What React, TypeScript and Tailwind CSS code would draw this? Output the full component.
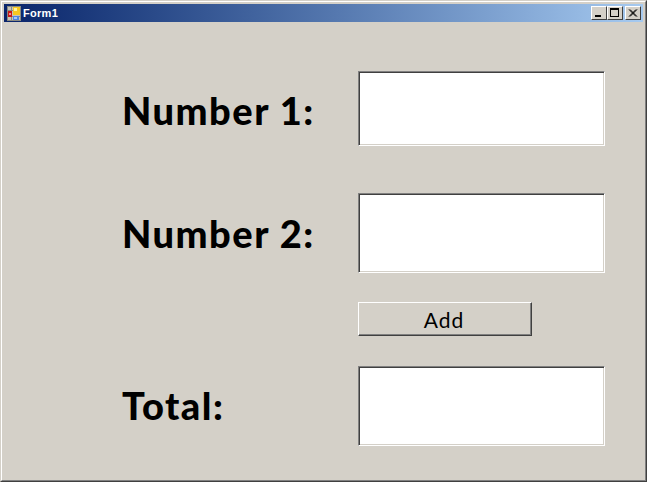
const frameBtn =
  "w-[16px] h-[14px] bg-[#d4d0c8] border border-t-white border-l-white border-r-[#404040] border-b-[#404040] flex items-center justify-center";

function TextBox({ h }: { h: string }) {
  return (
    <div className={`w-[247px] ${h} bg-white border border-t-[#808080] border-l-[#808080] border-r-white border-b-white shadow-[inset_1px_1px_0_#404040,inset_-1px_-1px_0_#d4d0c8]`} />
  );
}

function Label({ text, cls }: { text: string; cls: string }) {
  return (
    <div className={`w-[236px] shrink-0 font-['Lato',sans-serif] font-black text-black text-[38px] leading-none tracking-[1.5px] ${cls}`}>
      {text}
    </div>
  );
}

export default function App() {
  return (
    <div className="w-[647px] h-[482px] bg-[#d4d0c8] border border-t-[#d4d0c8] border-l-[#d4d0c8] border-r-[#404040] border-b-[#404040] overflow-hidden">
      <div className="h-full border border-t-white border-l-white border-r-[#808080] border-b-[#808080] p-[2px] flex flex-col">
        <div className="h-[18px] shrink-0 bg-gradient-to-r from-[#0a246a] to-[#a6caf0] flex items-center pl-[3px] pr-[2px]">
          <svg width="14" height="15" viewBox="0 0 14 15" className="shrink-0">
            <rect x="0.5" y="0.5" width="13" height="14" fill="#c8c4b8" stroke="#8a8a80" />
            <path d="M0 4.5h6M4.5 0v15M0 10.5h14M9.5 10v5" stroke="#8a8a80" fill="none" />
            <rect x="6" y="1" width="7" height="8" fill="#f8c820" />
            <rect x="7" y="2" width="3" height="3" fill="#fff2a0" />
            <rect x="1" y="5" width="4" height="6" fill="#c81818" />
            <rect x="2" y="7" width="2" height="2" fill="#f09090" />
            <rect x="6" y="10" width="6" height="4" fill="#5088e0" />
            <rect x="7" y="11" width="3" height="2" fill="#a8c8f8" />
          </svg>
          <span className="ml-[2px] font-['Liberation_Sans',sans-serif] font-bold text-white text-[11px] leading-none tracking-[0.3px]">Form1</span>
          <div className="ml-auto flex">
            <div className={frameBtn}>
              <svg width="14" height="12" viewBox="0 0 14 12">
                <rect x="3" y="8" width="6" height="2" fill="#000" />
              </svg>
            </div>
            <div className={frameBtn}>
              <svg width="14" height="12" viewBox="0 0 14 12">
                <path d="M2 1h9v9H2z M3 3v6h7V3z" fill="#000" fillRule="evenodd" />
              </svg>
            </div>
            <div className={`${frameBtn} ml-[2px]`}>
              <svg width="14" height="12" viewBox="0 0 14 12">
                <path d="M3.5 2.5l7 7M10.5 2.5l-7 7M4.5 2.5l7 7M11.5 2.5l-7 7" stroke="#000" fill="none" transform="translate(-0.5 0)" />
              </svg>
            </div>
          </div>
        </div>
        <div className="pt-[49px] pl-[118px] flex flex-col">
          <div className="flex items-center">
            <Label text="Number 1:" cls="pt-[3px]" />
            <TextBox h="h-[75px]" />
          </div>
          <div className="flex items-center mt-[47px]">
            <Label text="Number 2:" cls="" />
            <TextBox h="h-[80px]" />
          </div>
          <div className="pl-[236px] mt-[29px]">
            <div className="w-[174px] h-[34px] border border-t-white border-l-white border-r-[#404040] border-b-[#404040] shadow-[inset_-1px_-1px_0_#808080] flex items-center justify-center font-['Lato',sans-serif] text-black text-[21px] leading-none tracking-[1px] pr-[2px]">
              Add
            </div>
          </div>
          <div className="flex items-center mt-[30px]">
            <Label text="Total:" cls="pb-[2px]" />
            <TextBox h="h-[80px]" />
          </div>
        </div>
      </div>
    </div>
  );
}
